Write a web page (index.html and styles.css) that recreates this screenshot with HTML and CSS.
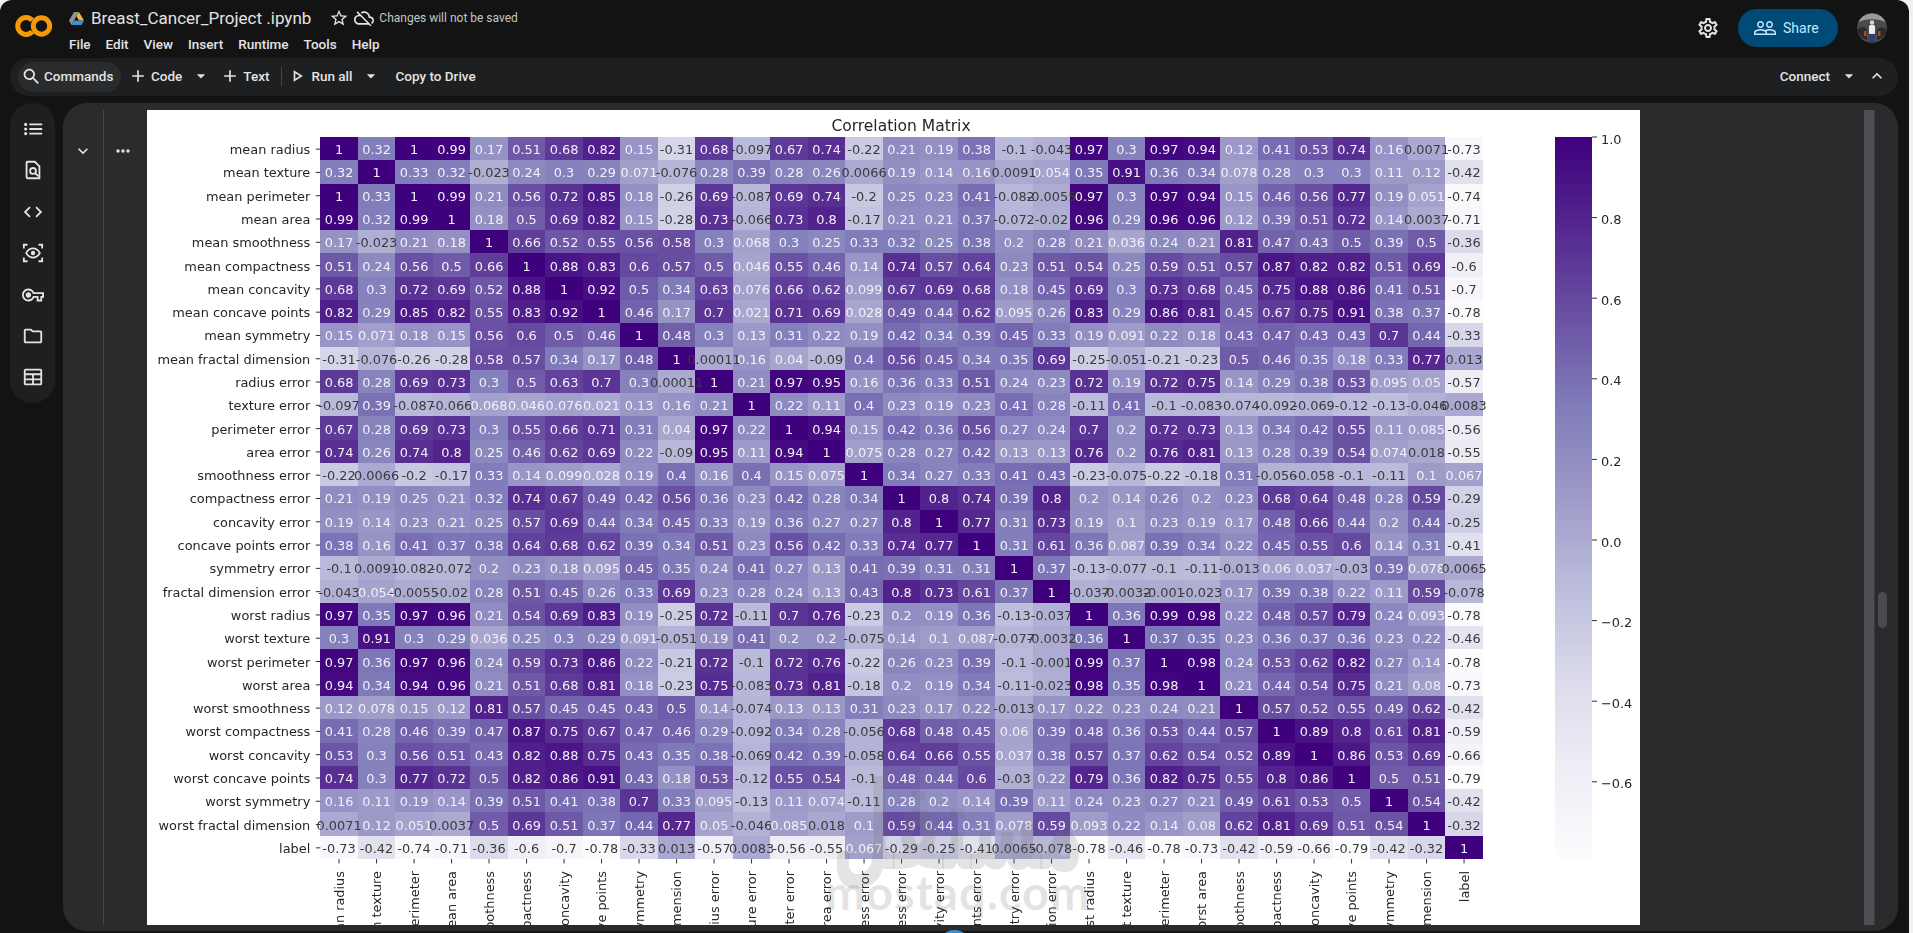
FILE: index.html
```html
<!DOCTYPE html>
<html lang="en">
<head>
<meta charset="utf-8">
<title>Breast_Cancer_Project .ipynb - Colab</title>
<link rel="stylesheet" href="styles.css">
</head>
<body>
<div class="app">
  <header class="header">
    <svg class="logo" viewBox="0 0 37 22"><path d="M17.2 5.2A8.4 8.4 0 1 0 17.2 16.8" fill="none" stroke="#f49a0a" stroke-width="5"/><circle cx="26.5" cy="11" r="8.2" fill="none" stroke="#f49a0a" stroke-width="5"/></svg>
    <div class="title-col">
      <div class="title-row">
        <svg class="drive" viewBox="0 0 30 26"><path d="M10 0h10l-10 17-5 9-5-9z" fill="#8d9296"/><path d="M20 0l10 17H20L15 8.5z" fill="#f5b52e"/><path d="M5 26l5-9h20l-5 9z" fill="#3f8fd8"/></svg>
        <span class="doc-name">Breast_Cancer_Project .ipynb</span>
        <svg class="ic star" viewBox="0 0 24 24"><path d="M22 9.24l-7.19-.62L12 2 9.19 8.63 2 9.24l5.46 4.73L5.82 21 12 17.27 18.18 21l-1.63-7.03L22 9.24zM12 15.4l-3.76 2.27 1-4.28-3.32-2.88 4.38-.38L12 6.1l1.71 4.04 4.38.38-3.32 2.88 1 4.28L12 15.4z"/></svg>
        <svg class="ic cloud" viewBox="0 0 24 24"><path d="M19.35 10.04C18.67 6.59 15.64 4 12 4c-1.48 0-2.85.43-4.01 1.17l1.46 1.46C10.21 6.23 11.08 6 12 6c3.04 0 5.5 2.46 5.5 5.5v.5H19c1.66 0 3 1.34 3 3 0 1.13-.64 2.11-1.56 2.62l1.45 1.45C23.16 18.16 24 16.68 24 15c0-2.64-2.05-4.78-4.65-4.96zM3 5.27l2.75 2.74C2.56 8.15 0 10.77 0 14c0 3.31 2.69 6 6 6h11.73l2 2L21 20.73 4.27 4 3 5.27zM7.73 10l8 8H6c-2.21 0-4-1.79-4-4s1.79-4 4-4h1.73z"/></svg>
        <span class="unsaved">Changes will not be saved</span>
      </div>
      <nav class="menu"><span>File</span><span>Edit</span><span>View</span><span>Insert</span><span>Runtime</span><span>Tools</span><span>Help</span></nav>
    </div>
    <div class="header-right">
      <svg class="ic gear" viewBox="0 0 24 24"><path d="M19.43 12.98c.04-.32.07-.64.07-.98 0-.34-.03-.66-.07-.98l2.11-1.65c.19-.15.24-.42.12-.64l-2-3.46c-.09-.16-.26-.25-.44-.25-.06 0-.12.01-.17.03l-2.49 1c-.52-.4-1.08-.73-1.69-.98l-.38-2.65C14.46 2.18 14.25 2 14 2h-4c-.25 0-.46.18-.49.42l-.38 2.65c-.61.25-1.17.59-1.69.98l-2.49-1c-.06-.02-.12-.03-.18-.03-.17 0-.34.09-.43.25l-2 3.46c-.13.22-.07.49.12.64l2.11 1.65c-.04.32-.07.65-.07.98 0 .33.03.66.07.98l-2.11 1.65c-.19.15-.24.42-.12.64l2 3.46c.09.16.26.25.44.25.06 0 .12-.01.17-.03l2.49-1c.52.4 1.08.73 1.69.98l.38 2.65c.03.24.24.42.49.42h4c.25 0 .46-.18.49-.42l.38-2.65c.61-.25 1.17-.59 1.69-.98l2.49 1c.06.02.12.03.18.03.17 0 .34-.09.43-.25l2-3.46c.12-.22.07-.49-.12-.64l-2.11-1.65zm-1.98-1.71c.04.31.05.52.05.73 0 .21-.02.43-.05.73l-.14 1.13.89.7 1.08.84-.7 1.21-1.27-.51-1.04-.42-.9.68c-.43.32-.84.56-1.25.73l-1.06.43-.16 1.13-.2 1.35h-1.4l-.19-1.35-.16-1.13-1.06-.43c-.43-.18-.83-.41-1.23-.71l-.91-.7-1.06.43-1.27.51-.7-1.21 1.08-.84.89-.7-.14-1.13c-.03-.31-.05-.54-.05-.74s.02-.43.05-.73l.14-1.13-.89-.7-1.08-.84.7-1.21 1.27.51 1.04.42.9-.68c.43-.32.84-.56 1.25-.73l1.06-.43.16-1.13.2-1.35h1.39l.19 1.35.16 1.13 1.06.43c.43.18.83.41 1.23.71l.91.7 1.06-.43 1.27-.51.7 1.21-1.07.85-.89.7.14 1.13zM12 8c-2.21 0-4 1.79-4 4s1.79 4 4 4 4-1.79 4-4-1.79-4-4-4zm0 6c-1.1 0-2-.9-2-2s.9-2 2-2 2 .9 2 2-.9 2-2 2z"/></svg>
      <div class="share">
        <svg class="ic people" viewBox="0 0 24 24"><path d="M16.5 13c-1.2 0-3.07.34-4.5 1-1.43-.67-3.3-1-4.5-1C5.33 13 1 14.08 1 16.25V19h22v-2.75c0-2.17-4.33-3.25-6.5-3.25zm-4 4.5h-10v-1.25c0-.54 2.56-1.75 5-1.75s5 1.21 5 1.75v1.25zm9 0H14v-1.25c0-.46-.2-.86-.52-1.22.88-.3 1.96-.53 3.02-.53 2.44 0 5 1.21 5 1.75v1.25zM7.5 12c1.93 0 3.5-1.57 3.5-3.5S9.43 5 7.5 5 4 6.57 4 8.5 5.57 12 7.5 12zm0-5.5c1.1 0 2 .9 2 2s-.9 2-2 2-2-.9-2-2 .9-2 2-2zm9 5.5c1.93 0 3.5-1.57 3.5-3.5S18.43 5 16.5 5 13 6.57 13 8.5s1.57 3.5 3.5 3.5zm0-5.5c1.1 0 2 .9 2 2s-.9 2-2 2-2-.9-2-2 .9-2 2-2z"/></svg>
        <span>Share</span>
      </div>
      <svg class="avatar" viewBox="0 0 30 30"><circle cx="15" cy="15" r="15" fill="#4a4a4c"/><path d="M1 10C6 5 24 5 29 10A15 15 0 0 0 1 10z" fill="#9a9b9d"/><path d="M0 17c5-4 8-3 10 0v10a15 15 0 0 1-10-10zM30 17c-5-4-8-3-10 0v10a15 15 0 0 0 10-10z" fill="#2a2a2c"/><circle cx="15" cy="9.500" r="2.200" fill="#e0d4c8"/><rect x="12" y="12" width="6" height="9" rx="1.500" fill="#eceded"/><rect x="12.500" y="21" width="5" height="8" fill="#2c3e77"/><rect x="7" y="18" width="2.500" height="5" fill="#a8482c"/><rect x="21" y="18" width="2.500" height="5" fill="#a8482c"/></svg>
    </div>
  </header>

  <div class="toolbar">
    <div class="commands">
      <svg class="ic search" viewBox="0 0 24 24"><path d="M15.5 14h-.79l-.28-.27C15.41 12.59 16 11.11 16 9.5 16 5.91 13.09 3 9.5 3S3 5.91 3 9.5 5.91 16 9.5 16c1.61 0 3.09-.59 4.23-1.57l.27.28v.79l5 4.99L20.49 19l-4.99-5zm-6 0C7.01 14 5 11.99 5 9.5S7.01 5 9.5 5 14 7.01 14 9.5 11.99 14 9.5 14z"/></svg>
      <span>Commands</span>
    </div>
    <svg class="ic tb-ic m-plus1" viewBox="0 0 24 24"><path d="M19 13h-6v6h-2v-6H5v-2h6V5h2v6h6v2z"/></svg>
    <span class="tb-label">Code</span>
    <svg class="ic tb-ic m-caret1" viewBox="0 0 24 24"><path d="M7 10l5 5 5-5z"/></svg>
    <svg class="ic tb-ic m-plus2" viewBox="0 0 24 24"><path d="M19 13h-6v6h-2v-6H5v-2h6V5h2v6h6v2z"/></svg>
    <span class="tb-label">Text</span>
    <div class="tb-divider"></div>
    <svg class="ic tb-ic m-play" viewBox="0 0 24 24"><path d="M10 8.640L15.270 12 10 15.360V8.640M8 5v14l11-7L8 5z"/></svg>
    <span class="tb-label run">Run all</span>
    <svg class="ic tb-ic m-caret2" viewBox="0 0 24 24"><path d="M7 10l5 5 5-5z"/></svg>
    <span class="tb-label copy">Copy to Drive</span>
    <span class="tb-label connect">Connect</span>
    <svg class="ic tb-ic m-caret3" viewBox="0 0 24 24"><path d="M7 10l5 5 5-5z"/></svg>
    <svg class="ic tb-ic" viewBox="0 0 24 24"><path d="M12 8l-6 6 1.410 1.410L12 10.830l4.590 4.580L18 14z"/></svg>
  </div>

  <main class="main">
    <aside class="sidebar">
      <svg class="ic side-ic" viewBox="0 0 24 24"><path d="M8 6h14v2H8zM8 11h14v2H8zM8 16h14v2H8z"/><circle cx="4" cy="7" r="1.700"/><circle cx="4" cy="12" r="1.700"/><circle cx="4" cy="17" r="1.700"/></svg>
      <svg class="ic side-ic" viewBox="0 0 24 24"><path d="M6 3h8l5 5v13H6a1 1 0 0 1-1-1V4a1 1 0 0 1 1-1z" fill="none" stroke="currentColor" stroke-width="2"/><circle cx="12" cy="13" r="3.200" fill="none" stroke="currentColor" stroke-width="2"/><path d="M14.300 15.300l3.700 3.700" stroke="currentColor" stroke-width="2"/></svg>
      <svg class="ic side-ic" viewBox="0 0 24 24"><path d="M9.400 16.600L4.800 12l4.600-4.600L8 6l-6 6 6 6 1.400-1.400zm5.200 0l4.600-4.600-4.600-4.600L16 6l6 6-6 6-1.400-1.400z"/></svg>
      <svg class="ic side-ic" viewBox="0 0 24 24"><path d="M2 7V3h4M18 3h4v4M22 17v4h-4M6 21H2v-4" fill="none" stroke="currentColor" stroke-width="2"/><path d="M4.500 12c2-3.500 4.700-5 7.500-5s5.500 1.500 7.500 5c-2 3.500-4.700 5-7.500 5s-5.500-1.500-7.500-5z" fill="none" stroke="currentColor" stroke-width="1.800"/><circle cx="12" cy="12" r="2.400"/></svg>
      <svg class="ic side-ic" viewBox="0 0 24 24"><path d="M22 19h-6v-4h-2.680c-1.140 2.420-3.600 4-6.320 4-3.860 0-7-3.140-7-7s3.140-7 7-7c2.720 0 5.170 1.580 6.320 4H24v6h-2v4zm-4-2h2v-4h2v-2H11.940l-.23-.67C11.010 8.340 9.110 7 7 7c-2.760 0-5 2.240-5 5s2.240 5 5 5c2.110 0 4.010-1.340 4.710-3.330l.23-.67H18v4zM7 15c-1.650 0-3-1.350-3-3s1.350-3 3-3 3 1.350 3 3-1.350 3-3 3z"/></svg>
      <svg class="ic side-ic" viewBox="0 0 24 24"><path d="M9.170 6l2 2H20v10H4V6h5.170M10 4H4c-1.100 0-1.990.9-1.990 2L2 18c0 1.100.9 2 2 2h16c1.100 0 2-.9 2-2V8c0-1.100-.9-2-2-2h-8l-2-2z"/></svg>
      <svg class="ic side-ic" viewBox="0 0 24 24"><path d="M4 4h16a1 1 0 0 1 1 1v14a1 1 0 0 1-1 1H4a1 1 0 0 1-1-1V5a1 1 0 0 1 1-1zM3 9h18M3 14.500h18M12 9v11" fill="none" stroke="currentColor" stroke-width="2"/></svg>
    </aside>

    <section class="cell">
      <div class="gutter">
        <svg class="ic gutter-ic" viewBox="0 0 24 24"><path d="M16.590 8.590L12 13.170 7.410 8.590 6 10l6 6 6-6z"/></svg>
      </div>
      <div class="gutter gutter-two">
        <svg class="dots" viewBox="0 0 14 4"><circle cx="2" cy="2" r="1.700"/><circle cx="7" cy="2" r="1.700"/><circle cx="12" cy="2" r="1.700"/></svg>
      </div>
      <figure class="output">
        <svg id="plot" class="plot" viewBox="0 0 1493 815" width="1493" height="815">
          <defs>
            <linearGradient id="purples" x1="0" y1="1" x2="0" y2="0">
              <stop offset="0" stop-color="#fcfbfd"/><stop offset=".125" stop-color="#efedf5"/><stop offset=".25" stop-color="#dadaeb"/><stop offset=".375" stop-color="#bcbddc"/><stop offset=".5" stop-color="#9e9ac8"/><stop offset=".625" stop-color="#807dba"/><stop offset=".75" stop-color="#6a51a3"/><stop offset=".875" stop-color="#54278f"/><stop offset="1" stop-color="#3f007d"/>
            </linearGradient>
          </defs>
          <text class="plot-title" x="754" y="21" text-anchor="middle">Correlation Matrix</text>
          <g id="cells"></g>
          <g id="ticks"></g>
          <g id="annots"></g>
          <rect x="1408" y="27" width="37" height="721" fill="url(#purples)"/>
          <g id="cbar"></g>
        </svg>
        <div class="watermark">
          <span class="wm-logo">مستقل</span>
          <span class="wm-text">mostaq.com</span>
        </div>
      </figure>
      <div class="out-scroll"></div>
      <div class="cell-rail"><div class="rail-thumb"></div></div>
    </section>
  </main>
  <div class="blue-dot"></div>
</div>
<script src="script.js"></script>
</body>
</html>
```
FILE: styles.css
```css
* { box-sizing: border-box; }
html, body { margin: 0; height: 100%; overflow: hidden; }
body { background: #eff0f2; font-family: Roboto, "Liberation Sans", sans-serif; color: #e3e3e3; }
.app { position: relative; width: 1909px; height: 933px; background: #131314; border-radius: 12px 12px 0 0; overflow: hidden; display: flex; flex-direction: column; }
.ic { fill: currentColor; flex: none; display: block; }

.header { height: 58px; display: flex; align-items: flex-start; padding: 15px 22px 0 15px; }
.logo { width: 37px; height: 22px; flex: none; }
.title-col { margin: -9px 0 0 17px; }
.title-row { display: flex; align-items: center; height: 24px; }
.drive { width: 15px; height: 13px; flex: none; margin-right: 7px; }
.doc-name { font-size: 17px; color: #e3e3e3; white-space: nowrap; }
.star { width: 20px; height: 20px; margin-left: 18px; color: #e3e3e3; }
.cloud { width: 20px; height: 20px; margin-left: 5px; color: #e3e3e3; }
.unsaved { font-size: 12px; color: #c4c7c5; margin-left: 5px; white-space: nowrap; }
.menu { display: flex; gap: 15px; margin-top: 5px; font-size: 13.5px; font-weight: 500; color: #e3e3e3; line-height: 18px; }
.header-right { margin-left: auto; display: flex; align-items: center; margin-top: -6px; }
.gear { width: 24px; height: 24px; }
.share { width: 100px; height: 38px; margin-left: 18px; border-radius: 19px; background: #004a77; color: #c2e7ff; display: flex; align-items: center; padding-left: 15px; gap: 6px; font-size: 14px; font-weight: 400; }
.people { width: 24px; height: 24px; }
.avatar { width: 30px; height: 30px; margin-left: 19px; flex: none; }

.toolbar { width: 1888px; height: 38px; margin-left: 10px; flex: none; background: #1e1f20; border-radius: 19px; display: flex; align-items: center; padding: 0 11px 0 8px; font-size: 13.5px; font-weight: 500; }
.commands { width: 103px; height: 30px; border-radius: 15px; background: #2a2b2d; display: flex; align-items: center; padding: 0 0 2px 3px; gap: 2px; flex: none; }
.search { width: 21px; height: 21px; }
.tb-ic { width: 20px; height: 20px; margin-bottom: 2px; }
.tb-label { white-space: nowrap; margin-left: 3px; margin-bottom: 2px; }
.m-plus1 { margin-left: 7px; }
.m-caret1 { margin-left: 9px; }
.m-plus2 { margin-left: 9px; }
.tb-divider { width: 1px; height: 19px; background: #444746; margin: 0 5px 2px 12px; }
.run { margin-left: 4px; }
.m-caret2 { margin-left: 9px; }
.copy { margin-left: 14px; }
.connect { margin-left: auto; }
.m-caret3 { margin: 0 8px 2px 9px; }

.main { flex: 1; display: flex; margin-top: 7px; min-height: 0; }
.sidebar { width: 45px; height: 300px; margin-left: 10px; background: #1e1f20; border-radius: 22px; flex: none; display: flex; flex-direction: column; align-items: center; padding-top: 15px; gap: 19.4px; }
.side-ic { width: 22px; height: 22px; color: #e3e3e3; }

.cell { width: 1835px; height: 828px; margin-left: 8px; background: #2a2b2d; border-radius: 24px; display: flex; padding-top: 7px; flex: none; }
.gutter { width: 40px; display: flex; justify-content: center; align-items: flex-start; padding-top: 31px; flex: none; }
.gutter-ic { width: 20px; height: 20px; color: #e3e3e3; }
.gutter-two { width: 44px; border-left: 1px solid #444746; justify-content: flex-start; padding: 39px 0 0 12px; height: 815px; }
.dots { width: 14px; height: 4px; fill: #e3e3e3; }
.output { position: relative; width: 1493px; height: 815px; margin: 0; background: #fff; overflow: hidden; flex: none; }
.plot { display: block; font-family: "DejaVu Sans", sans-serif; filter: blur(.35px); }
.plot-title { font-size: 15.500px; fill: #262626; }
.cell-text { font-size: 12.900px; text-anchor: middle; dominant-baseline: central; }
.on-dark { fill: #f2f0f8; }
.on-light { fill: #3a3a3a; }
.tick { stroke: #333; stroke-width: 1; }
.tick-label { font-size: 12.900px; fill: #262626; }
.tick-label-y { text-anchor: end; dominant-baseline: central; }
.tick-label-x { text-anchor: end; dominant-baseline: central; }
.cbar-label { font-size: 12.900px; fill: #262626; dominant-baseline: central; }

.watermark { position: absolute; left: 686px; top: 702px; width: 250px; display: flex; flex-direction: column; align-items: center; color: rgba(110, 110, 110, .19); pointer-events: none; }
.wm-logo { font-family: "DejaVu Sans", sans-serif; font-weight: 700; font-size: 82px; line-height: 60px; white-space: nowrap; transform: scale(.84, 1.5); transform-origin: center bottom; }
.wm-text { font-family: Lato, sans-serif; font-weight: 700; font-size: 47px; line-height: 40px; letter-spacing: 1px; white-space: nowrap; }

.out-scroll { width: 11px; height: 815px; margin-left: 224px; background: #4e4f52; border-right: 1px solid #38393b; flex: none; }
.cell-rail { flex: 1; position: relative; }
.rail-thumb { position: absolute; left: 3px; top: 482px; width: 9px; height: 36px; border-radius: 5px; background: #4a4b4e; }
.blue-dot { position: absolute; left: 938px; top: 930px; width: 33px; height: 33px; border-radius: 50%; background: #3b8fd4; }
```
FILE: script.js
```js
var labels = ["mean radius","mean texture","mean perimeter","mean area","mean smoothness","mean compactness","mean concavity","mean concave points","mean symmetry","mean fractal dimension","radius error","texture error","perimeter error","area error","smoothness error","compactness error","concavity error","concave points error","symmetry error","fractal dimension error","worst radius","worst texture","worst perimeter","worst area","worst smoothness","worst compactness","worst concavity","worst concave points","worst symmetry","worst fractal dimension","label"];
var rows = [
"1 0.32 1 0.99 0.17 0.51 0.68 0.82 0.15 -0.31 0.68 -0.097 0.67 0.74 -0.22 0.21 0.19 0.38 -0.1 -0.043 0.97 0.3 0.97 0.94 0.12 0.41 0.53 0.74 0.16 0.0071 -0.73",
"0.32 1 0.33 0.32 -0.023 0.24 0.3 0.29 0.071 -0.076 0.28 0.39 0.28 0.26 0.0066 0.19 0.14 0.16 0.0091 0.054 0.35 0.91 0.36 0.34 0.078 0.28 0.3 0.3 0.11 0.12 -0.42",
"1 0.33 1 0.99 0.21 0.56 0.72 0.85 0.18 -0.26 0.69 -0.087 0.69 0.74 -0.2 0.25 0.23 0.41 -0.082 -0.0055 0.97 0.3 0.97 0.94 0.15 0.46 0.56 0.77 0.19 0.051 -0.74",
"0.99 0.32 0.99 1 0.18 0.5 0.69 0.82 0.15 -0.28 0.73 -0.066 0.73 0.8 -0.17 0.21 0.21 0.37 -0.072 -0.02 0.96 0.29 0.96 0.96 0.12 0.39 0.51 0.72 0.14 0.0037 -0.71",
"0.17 -0.023 0.21 0.18 1 0.66 0.52 0.55 0.56 0.58 0.3 0.068 0.3 0.25 0.33 0.32 0.25 0.38 0.2 0.28 0.21 0.036 0.24 0.21 0.81 0.47 0.43 0.5 0.39 0.5 -0.36",
"0.51 0.24 0.56 0.5 0.66 1 0.88 0.83 0.6 0.57 0.5 0.046 0.55 0.46 0.14 0.74 0.57 0.64 0.23 0.51 0.54 0.25 0.59 0.51 0.57 0.87 0.82 0.82 0.51 0.69 -0.6",
"0.68 0.3 0.72 0.69 0.52 0.88 1 0.92 0.5 0.34 0.63 0.076 0.66 0.62 0.099 0.67 0.69 0.68 0.18 0.45 0.69 0.3 0.73 0.68 0.45 0.75 0.88 0.86 0.41 0.51 -0.7",
"0.82 0.29 0.85 0.82 0.55 0.83 0.92 1 0.46 0.17 0.7 0.021 0.71 0.69 0.028 0.49 0.44 0.62 0.095 0.26 0.83 0.29 0.86 0.81 0.45 0.67 0.75 0.91 0.38 0.37 -0.78",
"0.15 0.071 0.18 0.15 0.56 0.6 0.5 0.46 1 0.48 0.3 0.13 0.31 0.22 0.19 0.42 0.34 0.39 0.45 0.33 0.19 0.091 0.22 0.18 0.43 0.47 0.43 0.43 0.7 0.44 -0.33",
"-0.31 -0.076 -0.26 -0.28 0.58 0.57 0.34 0.17 0.48 1 0.00011 0.16 0.04 -0.09 0.4 0.56 0.45 0.34 0.35 0.69 -0.25 -0.051 -0.21 -0.23 0.5 0.46 0.35 0.18 0.33 0.77 0.013",
"0.68 0.28 0.69 0.73 0.3 0.5 0.63 0.7 0.3 0.00011 1 0.21 0.97 0.95 0.16 0.36 0.33 0.51 0.24 0.23 0.72 0.19 0.72 0.75 0.14 0.29 0.38 0.53 0.095 0.05 -0.57",
"-0.097 0.39 -0.087 -0.066 0.068 0.046 0.076 0.021 0.13 0.16 0.21 1 0.22 0.11 0.4 0.23 0.19 0.23 0.41 0.28 -0.11 0.41 -0.1 -0.083 -0.074 -0.092 -0.069 -0.12 -0.13 -0.046 0.0083",
"0.67 0.28 0.69 0.73 0.3 0.55 0.66 0.71 0.31 0.04 0.97 0.22 1 0.94 0.15 0.42 0.36 0.56 0.27 0.24 0.7 0.2 0.72 0.73 0.13 0.34 0.42 0.55 0.11 0.085 -0.56",
"0.74 0.26 0.74 0.8 0.25 0.46 0.62 0.69 0.22 -0.09 0.95 0.11 0.94 1 0.075 0.28 0.27 0.42 0.13 0.13 0.76 0.2 0.76 0.81 0.13 0.28 0.39 0.54 0.074 0.018 -0.55",
"-0.22 0.0066 -0.2 -0.17 0.33 0.14 0.099 0.028 0.19 0.4 0.16 0.4 0.15 0.075 1 0.34 0.27 0.33 0.41 0.43 -0.23 -0.075 -0.22 -0.18 0.31 -0.056 -0.058 -0.1 -0.11 0.1 0.067",
"0.21 0.19 0.25 0.21 0.32 0.74 0.67 0.49 0.42 0.56 0.36 0.23 0.42 0.28 0.34 1 0.8 0.74 0.39 0.8 0.2 0.14 0.26 0.2 0.23 0.68 0.64 0.48 0.28 0.59 -0.29",
"0.19 0.14 0.23 0.21 0.25 0.57 0.69 0.44 0.34 0.45 0.33 0.19 0.36 0.27 0.27 0.8 1 0.77 0.31 0.73 0.19 0.1 0.23 0.19 0.17 0.48 0.66 0.44 0.2 0.44 -0.25",
"0.38 0.16 0.41 0.37 0.38 0.64 0.68 0.62 0.39 0.34 0.51 0.23 0.56 0.42 0.33 0.74 0.77 1 0.31 0.61 0.36 0.087 0.39 0.34 0.22 0.45 0.55 0.6 0.14 0.31 -0.41",
"-0.1 0.0091 -0.082 -0.072 0.2 0.23 0.18 0.095 0.45 0.35 0.24 0.41 0.27 0.13 0.41 0.39 0.31 0.31 1 0.37 -0.13 -0.077 -0.1 -0.11 -0.013 0.06 0.037 -0.03 0.39 0.078 0.0065",
"-0.043 0.054 -0.0055 -0.02 0.28 0.51 0.45 0.26 0.33 0.69 0.23 0.28 0.24 0.13 0.43 0.8 0.73 0.61 0.37 1 -0.037 -0.0032 -0.001 -0.023 0.17 0.39 0.38 0.22 0.11 0.59 -0.078",
"0.97 0.35 0.97 0.96 0.21 0.54 0.69 0.83 0.19 -0.25 0.72 -0.11 0.7 0.76 -0.23 0.2 0.19 0.36 -0.13 -0.037 1 0.36 0.99 0.98 0.22 0.48 0.57 0.79 0.24 0.093 -0.78",
"0.3 0.91 0.3 0.29 0.036 0.25 0.3 0.29 0.091 -0.051 0.19 0.41 0.2 0.2 -0.075 0.14 0.1 0.087 -0.077 -0.0032 0.36 1 0.37 0.35 0.23 0.36 0.37 0.36 0.23 0.22 -0.46",
"0.97 0.36 0.97 0.96 0.24 0.59 0.73 0.86 0.22 -0.21 0.72 -0.1 0.72 0.76 -0.22 0.26 0.23 0.39 -0.1 -0.001 0.99 0.37 1 0.98 0.24 0.53 0.62 0.82 0.27 0.14 -0.78",
"0.94 0.34 0.94 0.96 0.21 0.51 0.68 0.81 0.18 -0.23 0.75 -0.083 0.73 0.81 -0.18 0.2 0.19 0.34 -0.11 -0.023 0.98 0.35 0.98 1 0.21 0.44 0.54 0.75 0.21 0.08 -0.73",
"0.12 0.078 0.15 0.12 0.81 0.57 0.45 0.45 0.43 0.5 0.14 -0.074 0.13 0.13 0.31 0.23 0.17 0.22 -0.013 0.17 0.22 0.23 0.24 0.21 1 0.57 0.52 0.55 0.49 0.62 -0.42",
"0.41 0.28 0.46 0.39 0.47 0.87 0.75 0.67 0.47 0.46 0.29 -0.092 0.34 0.28 -0.056 0.68 0.48 0.45 0.06 0.39 0.48 0.36 0.53 0.44 0.57 1 0.89 0.8 0.61 0.81 -0.59",
"0.53 0.3 0.56 0.51 0.43 0.82 0.88 0.75 0.43 0.35 0.38 -0.069 0.42 0.39 -0.058 0.64 0.66 0.55 0.037 0.38 0.57 0.37 0.62 0.54 0.52 0.89 1 0.86 0.53 0.69 -0.66",
"0.74 0.3 0.77 0.72 0.5 0.82 0.86 0.91 0.43 0.18 0.53 -0.12 0.55 0.54 -0.1 0.48 0.44 0.6 -0.03 0.22 0.79 0.36 0.82 0.75 0.55 0.8 0.86 1 0.5 0.51 -0.79",
"0.16 0.11 0.19 0.14 0.39 0.51 0.41 0.38 0.7 0.33 0.095 -0.13 0.11 0.074 -0.11 0.28 0.2 0.14 0.39 0.11 0.24 0.23 0.27 0.21 0.49 0.61 0.53 0.5 1 0.54 -0.42",
"0.0071 0.12 0.051 0.0037 0.5 0.69 0.51 0.37 0.44 0.77 0.05 -0.046 0.085 0.018 0.1 0.59 0.44 0.31 0.078 0.59 0.093 0.22 0.14 0.08 0.62 0.81 0.69 0.51 0.54 1 -0.32",
"-0.73 -0.42 -0.74 -0.71 -0.36 -0.6 -0.7 -0.78 -0.33 0.013 -0.57 0.0083 -0.56 -0.55 0.067 -0.29 -0.25 -0.41 0.0065 -0.078 -0.78 -0.46 -0.78 -0.73 -0.42 -0.59 -0.66 -0.79 -0.42 -0.32 1"
];

var NS = "http://www.w3.org/2000/svg";
var X0 = 173.3, Y0 = 27, CW = 37.5, CH = 23.29;
var stops = [[252,251,253],[239,237,245],[218,218,235],[188,189,220],[158,154,200],[128,125,186],[106,81,163],[84,39,143],[63,0,125]];

function el(parent, name, attrs, text) {
  var e = document.createElementNS(NS, name);
  for (var k in attrs) e.setAttribute(k, attrs[k]);
  if (text !== undefined) e.textContent = text;
  parent.appendChild(e);
  return e;
}
function colour(v) {
  var t = Math.min(1, Math.max(0, (v + 0.79) / 1.79)) * 8;
  var i = Math.min(7, Math.floor(t)), f = t - i, c = [];
  for (var n = 0; n < 3; n++) c.push(Math.round(stops[i][n] + (stops[i + 1][n] - stops[i][n]) * f));
  return "rgb(" + c.join(",") + ")";
}

var cellsG = document.getElementById("cells");
var annots = document.getElementById("annots");
var ticks = document.getElementById("ticks");
var cbar = document.getElementById("cbar");

rows.forEach(function (row, r) {
  row.split(" ").forEach(function (s, c) {
    var v = parseFloat(s);
    var x = X0 + c * CW, y = Y0 + r * CH;
    el(cellsG, "rect", { x: x, y: y, width: CW, height: CH, fill: colour(v), "shape-rendering": "crispEdges" });
    el(annots, "text", { x: x + CW / 2, y: y + CH / 2 + 1, "class": "cell-text " + (v >= 0.02 ? "on-dark" : "on-light") }, s);
  });
});

labels.forEach(function (name, i) {
  var y = Y0 + (i + 0.5) * CH, x = X0 + (i + 0.5) * CW;
  el(ticks, "line", { x1: X0 - 4.5, x2: X0, y1: y + 0.5, y2: y + 0.5, "class": "tick" });
  el(ticks, "text", { x: X0 - 10, y: y + 1, "class": "tick-label tick-label-y" }, name);
  el(ticks, "line", { x1: x, x2: x, y1: Y0 + 31 * CH, y2: Y0 + 31 * CH + 4.5, "class": "tick" });
  el(ticks, "text", { transform: "translate(" + x + "," + (Y0 + 31 * CH + 12) + ") rotate(-90)", "class": "tick-label tick-label-x" }, name);
});

["1.0", "0.8", "0.6", "0.4", "0.2", "0.0", "\u22120.2", "\u22120.4", "\u22120.6"].forEach(function (s) {
  var v = parseFloat(s.replace("\u2212", "-"));
  var y = 27 + (1 - v) * 403;
  el(cbar, "line", { x1: 1445, x2: 1450, y1: y, y2: y, "class": "tick" });
  el(cbar, "text", { x: 1454, y: y + 2, "class": "cbar-label" }, s);
});
```
